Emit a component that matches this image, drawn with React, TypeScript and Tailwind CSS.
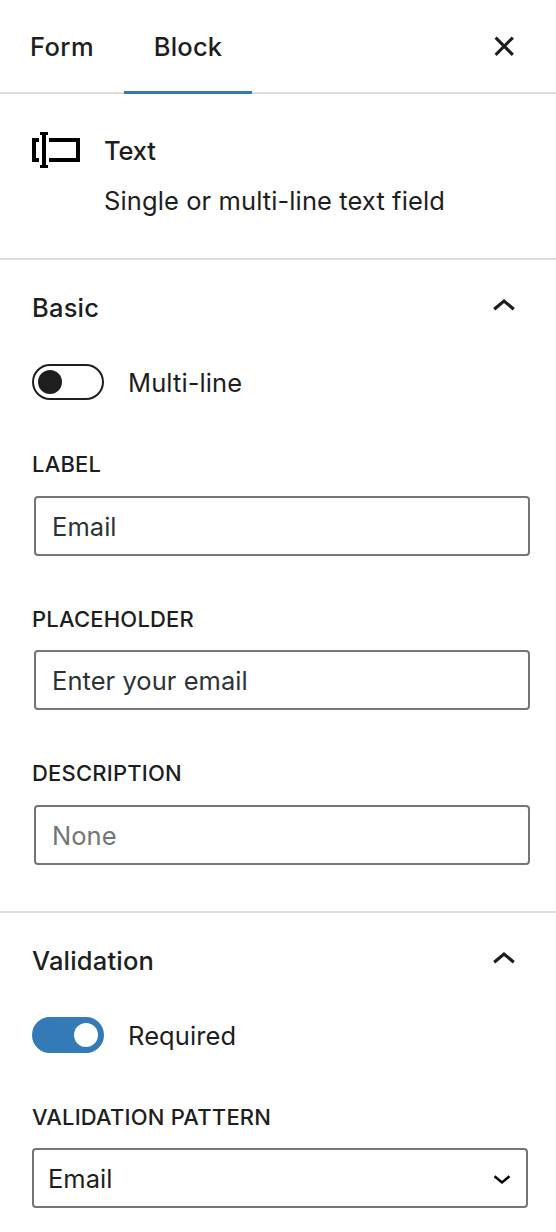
import React from 'react';
import clsx from 'clsx';

const fields = [
  { id: 'label', label: 'Label', value: 'Email', className: 'mt-[50px] gap-[18px]' },
  { id: 'placeholder', label: 'Placeholder', value: 'Enter your email', className: 'mt-[49px] gap-[17px]' },
  { id: 'description', label: 'Description', value: '', className: 'mt-[49px] gap-[18px]' },
];

const CloseIcon = () => (
  <svg width="48" height="48" viewBox="0 0 48 48" fill="none" stroke="#1e1e1e" strokeWidth="3.1">
    <path d="M15.6 15.6 32.8 32.8M32.8 15.6 15.6 32.8" />
  </svg>
);

const ChevronUpIcon = () => (
  <svg width="48" height="48" viewBox="0 0 48 48" fill="none" stroke="#1e1e1e" strokeWidth="3.2">
    <path d="M14.2 27.2 24 19 33.8 27.2" />
  </svg>
);

const TextFieldIcon = () => (
  <svg width="48" height="48" viewBox="0 0 48 48" fill="#000" shapeRendering="crispEdges">
    {/* Cursor */}
    <path d="M8 6h8v3h-2v30h2v3H8v-3h2V9H8z" />
    {/* Field outline */}
    <path d="M0 12h7v4H4v16h3v4H0z" />
    <path d="M17 12h31v24H17v-4h27V16H17z" />
  </svg>
);

const Toggle = ({ label, checked }: { label: string; checked: boolean }) => (
  <div className="flex items-center">
    <button
      role="switch"
      aria-checked={checked}
      aria-label={label}
      className={clsx(
        'flex h-9 w-[72px] items-center rounded-full border-2 px-1',
        checked ? 'justify-end border-[#347ab7] bg-[#347ab7]' : 'justify-start border-[#1e1e1e] bg-white'
      )}
    >
      <span className={clsx('size-6 rounded-full', checked ? 'bg-white' : 'bg-[#1e1e1e]')} />
    </button>
    <span className="ml-6 h-9 leading-[38px] tracking-[0.1px]">{label}</span>
  </div>
);

const FieldLabel = ({ children }: { children: React.ReactNode }) => (
  <div className="h-7 text-[22px] leading-7 font-medium tracking-[0.2px] uppercase">{children}</div>
);

const SectionTitle = ({ children }: { children: React.ReactNode }) => (
  <div className="flex h-12 items-center justify-between pr-7">
    <h2 className="mt-1 leading-10 font-medium tracking-[0.2px]">{children}</h2>
    <ChevronUpIcon />
  </div>
);

const App = () => {
  return (
    <div className="h-[1232px] w-[556px] overflow-hidden bg-white font-['Inter',sans-serif] text-[25.5px] text-[#1e1e1e]">
      {/* Tabs */}
      <div className="flex h-[94px] justify-between border-b-2 border-[#dddddd] pr-7">
        <div className="flex h-[94px]">
          <button className="w-[124px] pl-[30px] text-left leading-[94px] font-medium tracking-[0.4px]">Form</button>
          <button className="w-32 border-b-3 border-[#347ab7] pt-[3px] text-center leading-[88px] font-medium tracking-[0.2px]">
            Block
          </button>
        </div>
        <button aria-label="Close" className="mt-[22px] h-12">
          <CloseIcon />
        </button>
      </div>

      {/* Block card */}
      <div className="flex h-[166px] border-b-2 border-[#dddddd] pl-8">
        <div className="pt-8">
          <TextFieldIcon />
        </div>
        <div className="ml-6 pt-[37px]">
          <h1 className="leading-10 font-medium tracking-[-0.2px]">Text</h1>
          <p className="mt-2.5 leading-10 tracking-[0.1px]">Single or multi-line text field</p>
        </div>
      </div>

      {/* Basic */}
      <section className="h-[653px] border-b-2 border-[#dddddd] pt-[22px] pl-8">
        <SectionTitle>Basic</SectionTitle>
        <div className="mt-[34px]">
          <Toggle label="Multi-line" checked={false} />
        </div>
        {fields.map((field) => (
          <div key={field.id} className={clsx('flex flex-col', field.className)}>
            <FieldLabel>{field.label}</FieldLabel>
            <input
              aria-label={field.label}
              defaultValue={field.value}
              placeholder="None"
              className="ml-0.5 h-[60px] w-[496px] rounded-sm border-2 border-[#757575] px-4 tracking-[0.05px] text-[#2c3338] placeholder:text-[#757575]"
            />
          </div>
        ))}
      </section>

      {/* Validation */}
      <section className="pt-[22px] pl-8">
        <SectionTitle>Validation</SectionTitle>
        <div className="mt-[34px]">
          <Toggle label="Required" checked />
        </div>
        <div className="mt-[50px]">
          <FieldLabel>Validation pattern</FieldLabel>
          <button className="mt-[17px] flex h-[60px] w-[496px] items-center justify-between rounded-sm border-2 border-[#757575] px-3.5 pt-0.5">
            <span>Email</span>
            <svg width="20" height="20" viewBox="0 0 20 20" fill="none" stroke="#000" strokeWidth="2.5">
              <path d="m2.5 7.2 7.5 6.2 7.5-6.2" />
            </svg>
          </button>
        </div>
      </section>
    </div>
  );
};

export default App;
